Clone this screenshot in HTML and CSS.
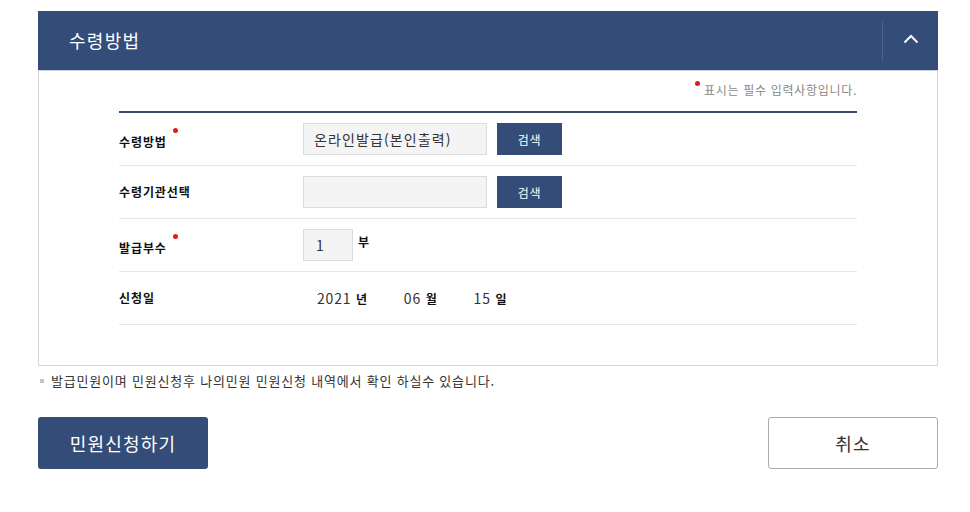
FILE: index.html
```html
<!DOCTYPE html>
<html lang="ko">
<head>
<meta charset="utf-8">
<title>수령방법</title>
<link rel="stylesheet" href="styles.css">
</head>
<body>
<div class="wrap">
  <section class="panel">
    <header class="panel-head">
      <h2 class="panel-title">수령방법</h2>
      <button class="toggle" type="button" aria-label="접기">
        <svg width="16" height="10" viewBox="0 0 16 10"><polyline points="1.5,8.5 8,2 14.5,8.5" fill="none" stroke="#fff" stroke-width="2"/></svg>
      </button>
    </header>
    <div class="panel-body">
      <p class="req-note"><span class="dot dot-note"></span>표시는 필수 입력사항입니다.</p>
      <div class="form-table">
        <div class="row">
          <div class="label">수령방법<span class="dot dot-label"></span></div>
          <div class="field">
            <span class="input wide">온라인발급(본인출력)</span>
            <button class="btn-search" type="button">검색</button>
          </div>
        </div>
        <div class="row">
          <div class="label">수령기관선택</div>
          <div class="field">
            <span class="input wide"></span>
            <button class="btn-search" type="button">검색</button>
          </div>
        </div>
        <div class="row">
          <div class="label">발급부수<span class="dot dot-label"></span></div>
          <div class="field">
            <span class="input small">1</span>
            <span class="unit">부</span>
          </div>
        </div>
        <div class="row">
          <div class="label">신청일</div>
          <div class="field date">
            <span class="date-part">2021 <b>년</b></span>
            <span class="date-part">06 <b>월</b></span>
            <span class="date-part">15 <b>일</b></span>
          </div>
        </div>
      </div>
    </div>
  </section>
  <p class="info"><span class="bullet"></span>발급민원이며 민원신청후 나의민원 민원신청 내역에서 확인 하실수 있습니다.</p>
  <div class="actions">
    <button class="btn-primary" type="button">민원신청하기</button>
    <button class="btn-cancel" type="button">취소</button>
  </div>
</div>
</body>
</html>
```

FILE: styles.css
```css
* { box-sizing: border-box; }
html, body { margin: 0; padding: 0; background: #fff; }
body {
  font-family: "Noto Sans CJK KR", "Noto Sans", sans-serif;
  color: #333;
  font-size: 13px;
}
.wrap {
  width: 900px;
  margin: 11px 0 0 38px;
}
.panel-head {
  height: 60px;
  background: #344d78;
  border-bottom: 1px solid #c9d2e3;
  display: flex;
  align-items: center;
  padding-left: 31px;
}
.panel-title {
  margin: 0;
  flex: 1;
  color: #fff;
  font-size: 18px;
  font-weight: 400;
  letter-spacing: 1.3px;
  line-height: 24px;
  padding-bottom: 2px;
}
.toggle {
  width: 56px;
  height: 40px;
  border: 0;
  border-left: 1px solid #4c638c;
  background: transparent;
  padding: 0 0 3px 0;
  display: flex;
  align-items: center;
  justify-content: center;
}
.panel-body {
  border: 1px solid #d5d5d5;
  border-top: 0;
  padding: 10px 80px 40px 80px;
}
.req-note {
  margin: 0 0 12px 0;
  text-align: right;
  font-size: 12px;
  letter-spacing: 0.7px;
  line-height: 18px;
  color: #888;
}
.dot {
  display: inline-block;
  width: 5px;
  height: 5px;
  border-radius: 50%;
  background: #e21b1b;
}
.dot-note { margin-right: 4px; vertical-align: 9px; }
.dot-label { margin-left: 6px; vertical-align: 14px; }
.form-table {
  border-top: 2px solid #394a68;
}
.row {
  height: 53px;
  border-bottom: 1px solid #e6e6e6;
  display: flex;
  align-items: center;
}
.label {
  width: 184px;
  font-size: 12px;
  font-weight: 700;
  letter-spacing: 0.9px;
  color: #111;
  line-height: 18px;
}
.field {
  display: flex;
  align-items: center;
}
.input {
  display: inline-flex;
  align-items: center;
  height: 32px;
  background: #f4f4f4;
  border: 1px solid #dcdcdc;
  font-size: 14px;
  letter-spacing: 1.1px;
  color: #333;
  padding-left: 10px;
}
.input.wide { width: 184px; }
.input.small { width: 50px; padding-left: 12px; font-size: 14px; }
.btn-search {
  margin-left: 10px;
  width: 65px;
  height: 32px;
  border: 0;
  background: #344d78;
  color: #fff;
  font-family: inherit;
  font-size: 12px;
  letter-spacing: 0.8px;
  padding: 0;
}
.unit {
  margin-left: 5px;
  font-size: 12px;
  font-weight: 700;
  color: #111;
  align-self: flex-start;
  margin-top: 4px;
}
.field.date {
  padding-left: 14px;
  gap: 36px;
  font-size: 14px;
  letter-spacing: 0.8px;
  color: #333;
}
.date-part b {
  font-size: 12px;
  font-weight: 700;
  color: #111;
}
.info {
  margin: 6px 0 0 0;
  font-size: 13px;
  letter-spacing: 0.8px;
  line-height: 18px;
  color: #333;
  display: flex;
  align-items: center;
}
.bullet {
  width: 4px;
  height: 4px;
  background: #c4c4c4;
  margin: 0 7px 0 2px;
}
.actions {
  margin-top: 27px;
  display: flex;
  justify-content: space-between;
}
.btn-primary, .btn-cancel {
  width: 170px;
  height: 52px;
  border-radius: 3px;
  font-family: inherit;
  font-size: 18px;
  letter-spacing: 1.2px;
  padding: 0;
}
.btn-primary {
  background: #344d78;
  border: 0;
  color: #fff;
}
.btn-cancel {
  background: #fff;
  border: 1px solid #aaa;
  color: #333;
}
```
